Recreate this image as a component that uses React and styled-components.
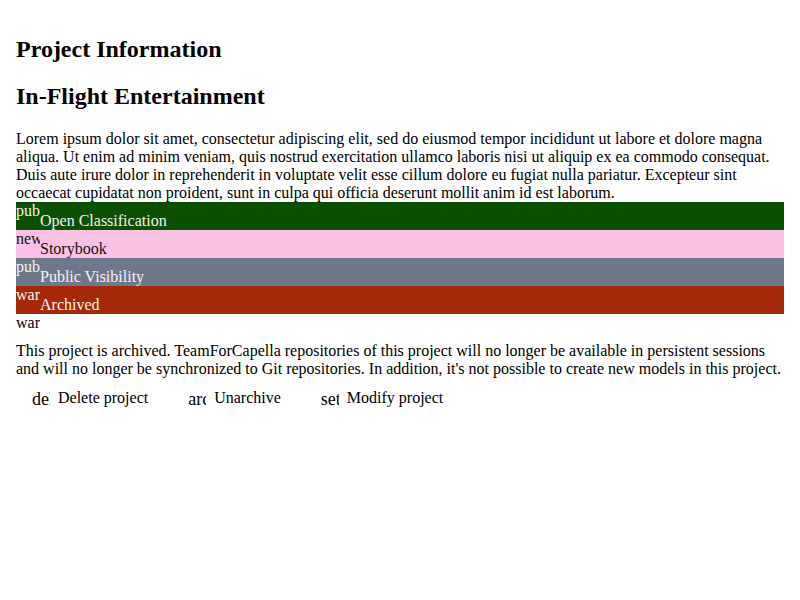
import styled, { createGlobalStyle } from "styled-components";

const GlobalStyle = createGlobalStyle`
  body {
    margin: 8px;
    font-family: "Liberation Serif", "Times New Roman", serif;
    font-size: 16px;
    color: #000;
    background: #fff;
  }
`;

const Page = styled.div`
  padding: 8px;
`;

const Heading = styled.h2`
  font-size: 24px;
  font-weight: bold;
  margin: 19.92px 0;
`;

const Description = styled.p`
  margin: 16px 0 0;
`;

const Tag = styled.div`
  background: ${(p) => p.$bg};
  color: ${(p) => p.$fg};
`;

const Icon = styled.span`
  display: inline-block;
  width: ${(p) => p.$size || 24}px;
  height: ${(p) => p.$size || 24}px;
  overflow: hidden;
  font-size: ${(p) => (p.$size === 18 ? 18 : 16)}px;
  white-space: nowrap;
  flex-shrink: 0;
`;

const Notice = styled.div``;

const NoticeText = styled.p`
  margin: 0;
`;

const Actions = styled.div`
  display: flex;
  margin-top: 5px;
`;

const ActionButton = styled.button`
  display: inline-flex;
  align-items: center;
  gap: 8px;
  padding: 6px 16px;
  margin-right: 8px;
  border: none;
  background: none;
  font: inherit;
  color: #000;
  cursor: pointer;
`;

const tags = [
  { icon: "public", label: "Open Classification", bg: "#0b5000", fg: "#f2f2f2" },
  { icon: "new_releases", label: "Storybook", bg: "#fbc1e4", fg: "#111" },
  { icon: "public", label: "Public Visibility", bg: "#6e788b", fg: "#f2f2f2" },
  { icon: "warning", label: "Archived", bg: "#a52807", fg: "#f2f2f2" },
];

const actions = [
  { icon: "delete", label: "Delete project" },
  { icon: "archive", label: "Unarchive" },
  { icon: "settings", label: "Modify project" },
];

export default function App() {
  return (
    <>
      <GlobalStyle />
      <Page>
        <Heading>Project Information</Heading>
        <Heading>In-Flight Entertainment</Heading>
        <Description>
          Lorem ipsum dolor sit amet, consectetur adipiscing elit, sed do eiusmod
          tempor incididunt ut labore et dolore magna aliqua. Ut enim ad minim
          veniam, quis nostrud exercitation ullamco laboris nisi ut aliquip ex ea
          commodo consequat. Duis aute irure dolor in reprehenderit in voluptate
          velit esse cillum dolore eu fugiat nulla pariatur. Excepteur sint
          occaecat cupidatat non proident, sunt in culpa qui officia deserunt
          mollit anim id est laborum.
        </Description>
        {tags.map((t) => (
          <Tag key={t.label} $bg={t.bg} $fg={t.fg}>
            <Icon>{t.icon}</Icon>
            {t.label}
          </Tag>
        ))}
        <Notice>
          <Icon>warning</Icon>
        </Notice>
        <NoticeText>
          This project is archived. TeamForCapella repositories of this project
          will no longer be available in persistent sessions and will no longer
          be synchronized to Git repositories. In addition, it's not possible to
          create new models in this project.
        </NoticeText>
        <Actions>
          {actions.map((a) => (
            <ActionButton key={a.label}>
              <Icon $size={18}>{a.icon}</Icon>
              {a.label}
            </ActionButton>
          ))}
        </Actions>
      </Page>
    </>
  );
}
